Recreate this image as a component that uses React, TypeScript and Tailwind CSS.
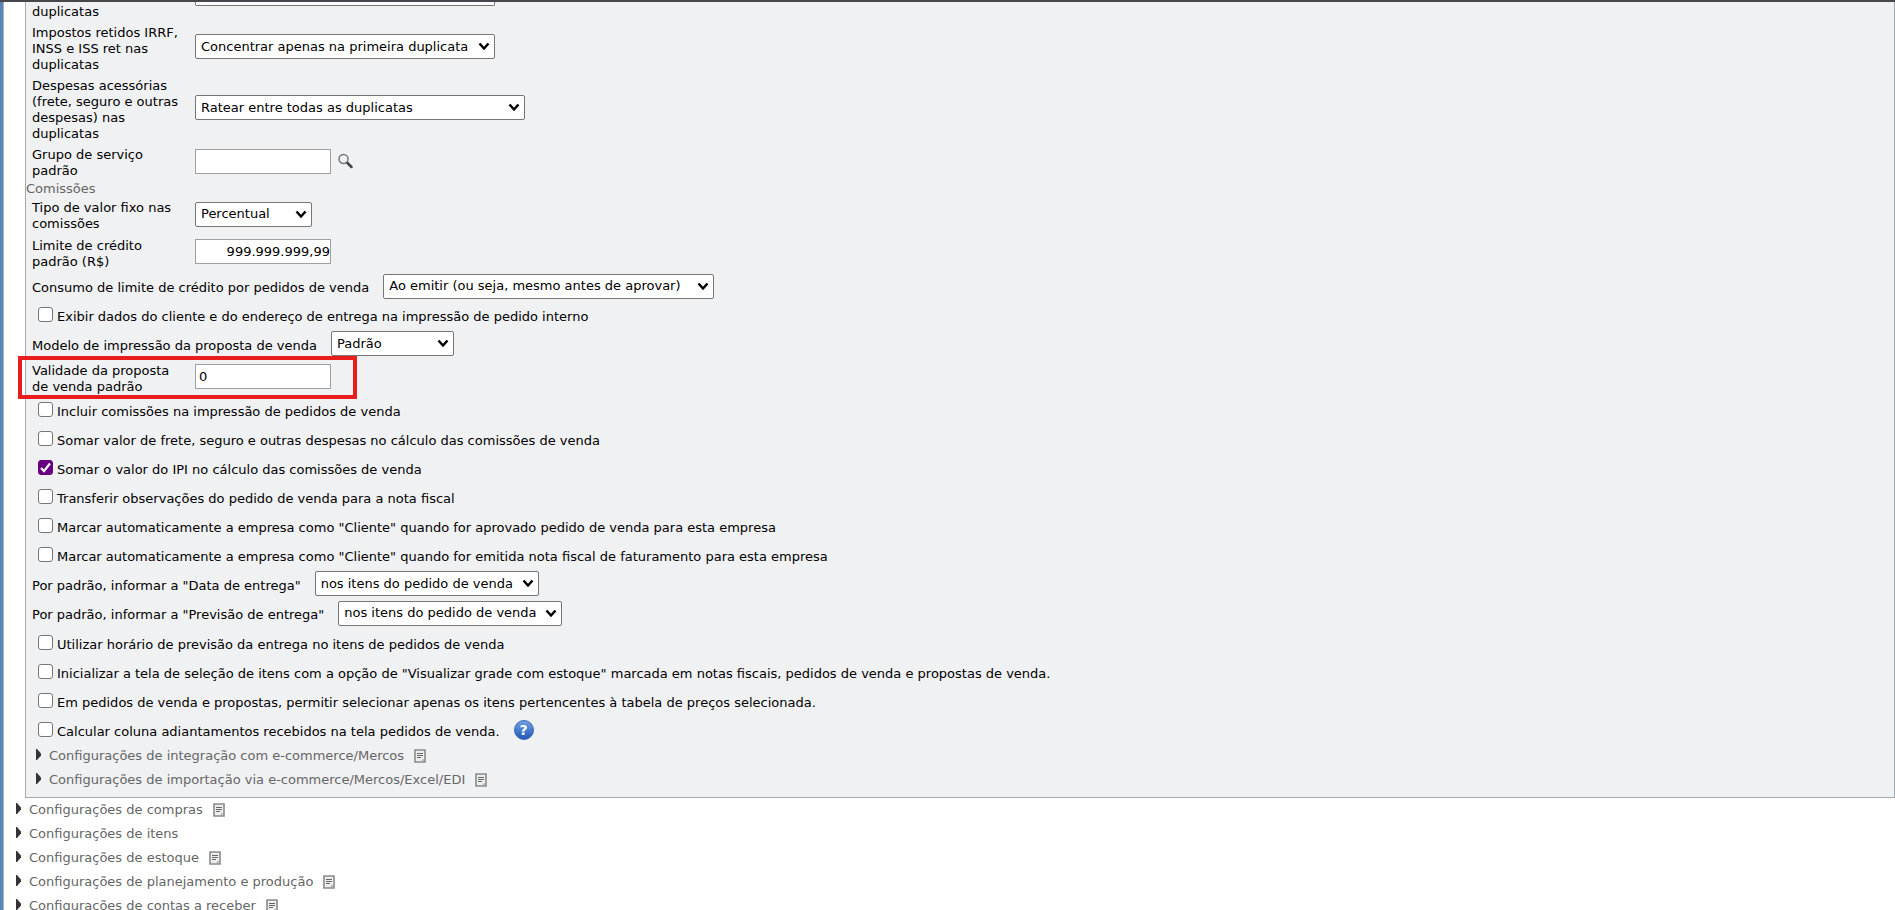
import type { ReactNode } from 'react'

function SelectField({ id, value, className }: { id: string; value: string; className: string }) {
  return (
    <span className={`relative inline-flex h-[25px] ${className}`}>
      <select
        id={id}
        className="h-full w-full appearance-none rounded-[2px] border border-[#767676] bg-white pl-[5px] text-[13px] text-black"
      >
        <option>{value}</option>
      </select>
      <svg className="pointer-events-none absolute top-2 right-[5px] h-[9px] w-[12px]" viewBox="0 0 12 9">
        <path d="M1.500 1.500 6 6.500 10.500 1.500" fill="none" stroke="#000" strokeWidth="2.500" />
      </svg>
    </span>
  )
}

function Field({ id, label, height, children }: { id: string; label: string; height: string; children: ReactNode }) {
  return (
    <div className={`flex items-center pl-1.5 ${height}`}>
      <label htmlFor={id} className="mr-2 w-[155px] shrink-0 pt-1">
        {label}
      </label>
      {children}
    </div>
  )
}

function InlineField({ id, label, height, children }: { id: string; label: string; height: string; children: ReactNode }) {
  return (
    <div className={`flex items-center gap-3.5 pl-1.5 ${height}`}>
      <label htmlFor={id} className="pt-1">
        {label}
      </label>
      {children}
    </div>
  )
}

function CheckRow({ id, label, checked, children }: { id: string; label: string; checked?: boolean; children?: ReactNode }) {
  return (
    <div className="flex h-[29px] items-center pl-3">
      <span className="relative mr-1 flex h-[15px] w-[15px]">
        <input
          id={id}
          type="checkbox"
          defaultChecked={checked}
          className="peer h-full w-full appearance-none rounded-[3px] border border-[#767676] bg-white checked:border-[#660080] checked:bg-[#660080]"
        />
        <svg className="pointer-events-none absolute inset-0 hidden peer-checked:block" viewBox="0 0 15 15">
          <path d="M3 8l3 3 6-7.500" fill="none" stroke="#fff" strokeWidth="2.200" />
        </svg>
      </span>
      <label htmlFor={id} className="pt-1">
        {label}
      </label>
      {children}
    </div>
  )
}

function NoteIcon() {
  return (
    <svg className="ml-2.5 h-[14px] w-[12px]" viewBox="0 0 12 14">
      <path d="M1 1h10v12H1z" fill="#ededed" stroke="#8a8a8a" strokeWidth="1.600" />
      <path d="M3 4.500h6M3 6.500h6M3 8.500h4" stroke="#666" strokeWidth="1" />
      <path d="M8 12.500v-2h3z" fill="#a0a0a0" />
    </svg>
  )
}

function Section({ label, note }: { label: string; note?: boolean }) {
  return (
    <button type="button" className="flex h-6 items-center text-[#666]">
      <svg className="mr-[7px] mb-1 h-[11px] w-[6px]" viewBox="0 0 6 11">
        <path d="M0 0h1l4 4.500v2L1 11H0z" fill="#333" />
      </svg>
      <span>{label}</span>
      {note && <NoteIcon />}
    </button>
  )
}

const sections = [
  { label: 'Configurações de compras', note: true },
  { label: 'Configurações de itens', note: false },
  { label: 'Configurações de estoque', note: true },
  { label: 'Configurações de planejamento e produção', note: true },
  { label: 'Configurações de contas a receber', note: true },
]

const textInput = 'h-[25px] w-[136px] border border-[#a0a0a0] bg-white text-[13px] text-black'

export default function App() {
  return (
    <div className="h-screen overflow-hidden border-t-2 border-[#46464b] bg-white font-['Verdana','DejaVu_Sans',sans-serif] text-[13px] leading-4 text-black">
      <div className="min-h-full border-l-3 border-[#5b84b7]">
        <div className="border-l border-[#a9b0b8]">
          <main className="ml-[21px] border-r border-b border-l border-[#a3a9b1] bg-[#f0f1f3] pb-[5px]">
            <div className="flex h-[18px] items-start pl-1.5">
              <label htmlFor="outros" className="mr-2 w-[155px] pt-0.5">
                duplicatas
              </label>
              <select
                id="outros"
                className="h-[4px] w-[300px] appearance-none rounded-b-[2px] border border-t-0 border-[#767676] bg-white"
              />
            </div>
            <Field id="impostos" label="Impostos retidos IRRF, INSS e ISS ret nas duplicatas" height="h-[53px]">
              <SelectField id="impostos" value="Concentrar apenas na primeira duplicata" className="w-[300px]" />
            </Field>
            <Field id="despesas" label="Despesas acessórias (frete, seguro e outras despesas) nas duplicatas" height="h-[69px]">
              <SelectField id="despesas" value="Ratear entre todas as duplicatas" className="w-[330px]" />
            </Field>
            <Field id="grupo" label="Grupo de serviço padrão" height="h-[38px]">
              <input id="grupo" type="text" className={textInput} />
              <button type="button" aria-label="Pesquisar" className="ml-[7px]">
                <svg className="h-4 w-4" viewBox="0 0 16 16">
                  <circle cx="5.500" cy="6" r="4.500" fill="#f0f1f3" stroke="#777" strokeWidth="1.500" />
                  <path d="M9.500 10l4 4" stroke="#444" strokeWidth="2.500" strokeLinecap="round" />
                </svg>
              </button>
            </Field>
            <h2 className="pt-px text-[#666]">Comissões</h2>
            <Field id="tipo" label="Tipo de valor fixo nas comissões" height="h-[34px]">
              <SelectField id="tipo" value="Percentual" className="w-[117px]" />
            </Field>
            <Field id="limite" label="Limite de crédito padrão (R$)" height="h-[41px]">
              <input id="limite" type="text" defaultValue="999.999.999,99" className={`${textInput} text-right`} />
            </Field>
            <InlineField id="consumo" label="Consumo de limite de crédito por pedidos de venda" height="h-[28px]">
              <SelectField id="consumo" value="Ao emitir (ou seja, mesmo antes de aprovar)" className="w-[331px]" />
            </InlineField>
            <CheckRow id="exibir" label="Exibir dados do cliente e do endereço de entrega na impressão de pedido interno" />
            <InlineField id="modelo" label="Modelo de impressão da proposta de venda" height="h-[29px]">
              <SelectField id="modelo" value="Padrão" className="w-[123px]" />
            </InlineField>
            <div className="relative">
              <Field id="validade" label="Validade da proposta de venda padrão" height="h-[37px]">
                <input id="validade" type="text" defaultValue="0" className={`${textInput} pl-[3px]`} />
              </Field>
              <div className="pointer-events-none absolute -top-[2px] -left-[8px] h-[43px] w-[339px] border-4 border-[#ea1d1d]" />
            </div>
            <CheckRow id="incluir" label="Incluir comissões na impressão de pedidos de venda" />
            <CheckRow id="frete" label="Somar valor de frete, seguro e outras despesas no cálculo das comissões de venda" />
            <CheckRow id="ipi" checked label="Somar o valor do IPI no cálculo das comissões de venda" />
            <CheckRow id="transferir" label="Transferir observações do pedido de venda para a nota fiscal" />
            <CheckRow id="aprovado" label={'Marcar automaticamente a empresa como "Cliente" quando for aprovado pedido de venda para esta empresa'} />
            <CheckRow id="emitida" label={'Marcar automaticamente a empresa como "Cliente" quando for emitida nota fiscal de faturamento para esta empresa'} />
            <InlineField id="data" label={'Por padrão, informar a "Data de entrega"'} height="h-[29px]">
              <SelectField id="data" value="nos itens do pedido de venda" className="w-[224px]" />
            </InlineField>
            <InlineField id="previsao" label={'Por padrão, informar a "Previsão de entrega"'} height="h-[30px]">
              <SelectField id="previsao" value="nos itens do pedido de venda" className="w-[224px]" />
            </InlineField>
            <CheckRow id="horario" label="Utilizar horário de previsão da entrega no itens de pedidos de venda" />
            <CheckRow id="grade" label={'Inicializar a tela de seleção de itens com a opção de "Visualizar grade com estoque" marcada em notas fiscais, pedidos de venda e propostas de venda.'} />
            <CheckRow id="tabela" label="Em pedidos de venda e propostas, permitir selecionar apenas os itens pertencentes à tabela de preços selecionada." />
            <CheckRow id="calcular" label="Calcular coluna adiantamentos recebidos na tela pedidos de venda.">
              <button
                type="button"
                className="ml-3.5 h-5 w-5 rounded-full border border-[#3a68ae] bg-linear-to-b from-[#6fa0e4] to-[#2257b8] text-center text-[14px] leading-[18px] font-bold text-white"
              >
                ?
              </button>
            </CheckRow>
            <div className="pl-2.5">
              <Section label="Configurações de integração com e-commerce/Mercos" note />
              <Section label="Configurações de importação via e-commerce/Mercos/Excel/EDI" note />
            </div>
          </main>
          <nav className="pl-3">
            {sections.map((s) => (
              <Section key={s.label} label={s.label} note={s.note} />
            ))}
          </nav>
        </div>
      </div>
    </div>
  )
}
